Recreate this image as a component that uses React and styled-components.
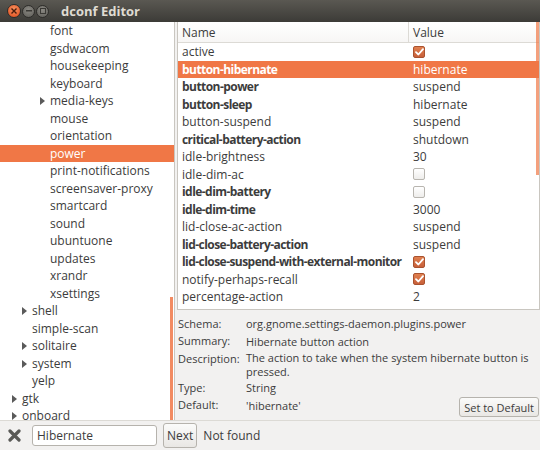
import React from 'react'
import styled, { createGlobalStyle } from 'styled-components'

const GlobalStyle = createGlobalStyle`
  html, body { margin: 0; padding: 0; background: #f2f1f0; }
  body { font-family: "Open Sans", "Noto Sans", "DejaVu Sans", sans-serif; font-size: 12px; color: #3c3c3c; }
  * { box-sizing: border-box; }
`

const ORANGE = '#f07746'

const tree = [
  { label: 'font', level: 2 },
  { label: 'gsdwacom', level: 2 },
  { label: 'housekeeping', level: 2 },
  { label: 'keyboard', level: 2 },
  { label: 'media-keys', level: 2, arrow: true },
  { label: 'mouse', level: 2 },
  { label: 'orientation', level: 2 },
  { label: 'power', level: 2, selected: true },
  { label: 'print-notifications', level: 2 },
  { label: 'screensaver-proxy', level: 2 },
  { label: 'smartcard', level: 2 },
  { label: 'sound', level: 2 },
  { label: 'ubuntuone', level: 2 },
  { label: 'updates', level: 2 },
  { label: 'xrandr', level: 2 },
  { label: 'xsettings', level: 2 },
  { label: 'shell', level: 1, arrow: true },
  { label: 'simple-scan', level: 1 },
  { label: 'solitaire', level: 1, arrow: true },
  { label: 'system', level: 1, arrow: true },
  { label: 'yelp', level: 1 },
  { label: 'gtk', level: 0, arrow: true },
  { label: 'onboard', level: 0, arrow: true },
]

const keys = [
  { name: 'active', check: true },
  { name: 'button-hibernate', bold: true, value: 'hibernate', selected: true },
  { name: 'button-power', bold: true, value: 'suspend' },
  { name: 'button-sleep', bold: true, value: 'hibernate' },
  { name: 'button-suspend', value: 'suspend' },
  { name: 'critical-battery-action', bold: true, value: 'shutdown' },
  { name: 'idle-brightness', value: '30' },
  { name: 'idle-dim-ac', check: false },
  { name: 'idle-dim-battery', bold: true, check: false },
  { name: 'idle-dim-time', bold: true, value: '3000' },
  { name: 'lid-close-ac-action', value: 'suspend' },
  { name: 'lid-close-battery-action', bold: true, value: 'suspend' },
  { name: 'lid-close-suspend-with-external-monitor', bold: true, check: true },
  { name: 'notify-perhaps-recall', check: true },
  { name: 'percentage-action', value: '2' },
]

const textIndent = [22, 32, 50]

const Window = styled.div`
  width: 540px;
  height: 450px;
  display: flex;
  flex-direction: column;
  background: #f2f1f0;
  overflow: hidden;
`

const TitleBar = styled.div`
  height: 22px;
  flex: none;
  display: flex;
  align-items: center;
  padding-left: 7px;
  background: linear-gradient(#5a5852, #3c3b37);
  color: #dfdbd2;
  font-weight: bold;
  font-size: 13px;
`

const WinButtons = styled.div`
  display: flex;
  align-items: center;
  gap: 1px;
  margin-right: 12px;
`

const Circle = styled.span`
  width: ${p => (p.$close ? 14 : 13)}px;
  height: ${p => (p.$close ? 14 : 13)}px;
  border-radius: 50%;
  display: inline-flex;
  align-items: center;
  justify-content: center;
  background: ${p => (p.$close ? 'radial-gradient(circle at 50% 35%, #f7915f, #df4a1a)' : 'radial-gradient(circle at 50% 35%, #8b8983, #5c5b56)')};
  border: 1px solid #2e2d2a;
`

const Body = styled.div`
  flex: 1;
  display: flex;
  min-height: 0;
`

const TreePane = styled.div`
  width: 175px;
  flex: none;
  background: #fff;
  border-right: 1px solid #c9c6c0;
  position: relative;
  overflow: hidden;
`

const TreeRow = styled.div`
  height: 17.5px;
  display: flex;
  align-items: center;
  position: relative;
  padding-left: ${p => p.$indent}px;
  background: ${p => (p.$selected ? ORANGE : 'transparent')};
  color: ${p => (p.$selected ? '#fff' : '#3c3c3c')};
  white-space: nowrap;
`

const Arrow = styled.span`
  position: absolute;
  left: ${p => p.$indent - 10}px;
  top: 5px;
  width: 0;
  height: 0;
  border-top: 4px solid transparent;
  border-bottom: 4px solid transparent;
  border-left: 5px solid #5a5a5a;
`

const OverlayBar = styled.div`
  position: absolute;
  right: ${p => p.$right}px;
  top: ${p => p.$top}px;
  width: 3px;
  height: ${p => p.$h}px;
  background: ${ORANGE};
  opacity: ${p => p.$op};
`

const RightColumn = styled.div`
  flex: 1;
  display: flex;
  flex-direction: column;
  padding-left: 2px;
  min-width: 0;
`

const KeyList = styled.div`
  height: 288px;
  flex: none;
  background: #fff;
  border: 1px solid #c9c6c0;
  border-top: none;
  position: relative;
  overflow: hidden;
`

const KeyHeader = styled.div`
  height: 21px;
  display: grid;
  grid-template-columns: 230px 1fr;
  align-items: center;
  border-bottom: 1px solid #dcdad5;
  background: linear-gradient(#ffffff, #f7f6f5);
`

const HeadCell = styled.div`
  padding-left: ${p => p.$pad}px;
  height: 100%;
  display: flex;
  align-items: center;
  border-left: ${p => (p.$sep ? '1px solid #dcdad5' : 'none')};
`

const KeyRow = styled.div`
  height: 17.5px;
  display: grid;
  grid-template-columns: 230px 1fr;
  align-items: center;
  background: ${p => (p.$selected ? ORANGE : 'transparent')};
  color: ${p => (p.$selected ? '#fff' : '#3c3c3c')};
  white-space: nowrap;
`

const KeyName = styled.div`
  padding-left: 4px;
  font-weight: ${p => (p.$bold ? 'bold' : 'normal')};
  letter-spacing: ${p => (p.$bold ? '-0.55px' : '0')};
  overflow: hidden;
`

const KeyValue = styled.div`
  padding-left: 5px;
  display: flex;
  align-items: center;
`

const Check = styled.span`
  width: 12px;
  height: 12px;
  border-radius: 2px;
  display: inline-flex;
  align-items: center;
  justify-content: center;
  background: ${p => (p.$on ? 'linear-gradient(#e0804f, #c8603a)' : 'linear-gradient(#ffffff, #eeedeb)')};
  border: 1px solid ${p => (p.$on ? '#a9522f' : '#b8b5af')};
`

const Info = styled.div`
  display: grid;
  grid-template-columns: 68px 1fr;
  grid-auto-rows: minmax(17.5px, auto);
  padding: 5px 0 0 1px;
  font-size: 11px;
  line-height: 14px;
  align-items: center;
`

const InfoLabel = styled.div`
  align-self: ${p => (p.$top ? 'start' : 'center')};
  padding-top: ${p => (p.$top ? 2 : 0)}px;
`

const InfoValue = styled.div`
  padding: 1px 8px 0 0;
`

const Actions = styled.div`
  display: flex;
  justify-content: flex-end;
  margin-top: -17px;
  padding-right: 1px;
`

const Button = styled.button`
  font-family: inherit;
  font-size: ${p => p.$fs}px;
  color: #3c3c3c;
  height: ${p => p.$h}px;
  padding: 0 ${p => p.$px}px;
  border: 1px solid #b6b3ad;
  border-radius: 3px;
  background: linear-gradient(#fbfbfa, #e9e7e4);
`

const FindBar = styled.div`
  height: 30px;
  flex: none;
  display: flex;
  align-items: center;
  padding-left: 8px;
  border-top: 1px solid #dcdad5;
`

const Entry = styled.div`
  width: 125px;
  height: 21px;
  margin-left: 11px;
  margin-right: 6px;
  border: 1px solid #b6b3ad;
  border-radius: 3px;
  background: #fff;
  padding-left: 4px;
  display: flex;
  align-items: center;
`

const Status = styled.span`
  margin-left: 6px;
`

function CheckBox({ on }) {
  return (
    <Check $on={on}>
      {on && (
        <svg width="9" height="8" viewBox="0 0 9 8">
          <path d="M1 4.2 L3.4 6.5 L8 1.2" fill="none" stroke="#fff" strokeWidth="1.8" strokeLinecap="round" strokeLinejoin="round" />
        </svg>
      )}
    </Check>
  )
}

export default function App() {
  return (
    <>
      <GlobalStyle />
      <Window>
        <TitleBar>
          <WinButtons>
            <Circle $close>
              <svg width="6" height="6" viewBox="0 0 6 6">
                <path d="M0.5 0.5 L5.5 5.5 M5.5 0.5 L0.5 5.5" stroke="#4a1c0c" strokeWidth="1.4" />
              </svg>
            </Circle>
            <Circle>
              <svg width="6" height="2" viewBox="0 0 6 2"><rect width="6" height="1.5" fill="#3a3935" /></svg>
            </Circle>
            <Circle>
              <svg width="6" height="6" viewBox="0 0 6 6"><rect x="0.5" y="0.5" width="5" height="5" fill="none" stroke="#3a3935" /></svg>
            </Circle>
          </WinButtons>
          dconf Editor
        </TitleBar>
        <Body>
          <TreePane>
            {tree.map(r => (
              <TreeRow key={r.label} $indent={textIndent[r.level]} $selected={r.selected}>
                {r.arrow && <Arrow $indent={textIndent[r.level]} />}
                {r.label}
              </TreeRow>
            ))}
            <OverlayBar $right={1} $top={275} $h={123} $op={0.85} />
          </TreePane>
          <RightColumn>
            <KeyList>
              <KeyHeader>
                <HeadCell $pad={4}>Name</HeadCell>
                <HeadCell $pad={4} $sep>Value</HeadCell>
              </KeyHeader>
              {keys.map(k => (
                <KeyRow key={k.name} $selected={k.selected}>
                  <KeyName $bold={k.bold}>{k.name}</KeyName>
                  <KeyValue>{k.check !== undefined ? <CheckBox on={k.check} /> : k.value}</KeyValue>
                </KeyRow>
              ))}
              <OverlayBar $right={0} $top={0} $h={153} $op={0.7} />
            </KeyList>
            <Info>
              <InfoLabel>Schema:</InfoLabel>
              <InfoValue>org.gnome.settings-daemon.plugins.power</InfoValue>
              <InfoLabel>Summary:</InfoLabel>
              <InfoValue>Hibernate button action</InfoValue>
              <InfoLabel $top>Description:</InfoLabel>
              <InfoValue>The action to take when the system hibernate button is pressed.</InfoValue>
              <InfoLabel>Type:</InfoLabel>
              <InfoValue>String</InfoValue>
              <InfoLabel>Default:</InfoLabel>
              <InfoValue>'hibernate'</InfoValue>
            </Info>
            <Actions>
              <Button $h={20} $px={4} $fs={11}>Set to Default</Button>
            </Actions>
          </RightColumn>
        </Body>
        <FindBar>
          <svg width="13" height="13" viewBox="0 0 13 13">
            <path d="M2 2 L11 11 M11 2 L2 11" stroke="#5a5a57" strokeWidth="3.2" strokeLinecap="round" />
          </svg>
          <Entry>Hibernate</Entry>
          <Button $h={25} $px={3} $fs={12}>Next</Button>
          <Status>Not found</Status>
        </FindBar>
      </Window>
    </>
  )
}
